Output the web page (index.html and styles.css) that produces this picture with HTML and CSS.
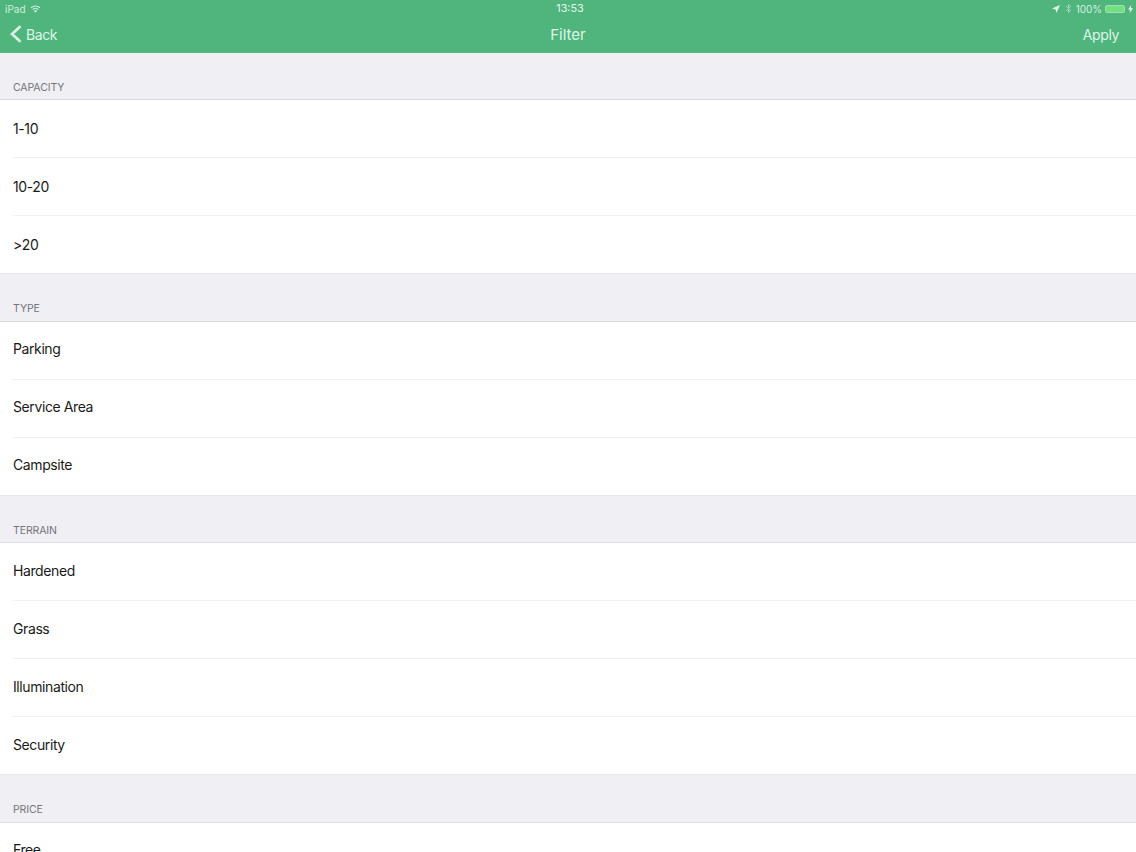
FILE: index.html
```html
<!DOCTYPE html>
<html lang="en">
<head>
<meta charset="utf-8">
<title>Filter</title>
<link rel="stylesheet" href="styles.css">
</head>
<body>
<div class="app">
  <header class="nav">
    <div class="status">
      <div class="status-left">
        <span>iPad</span>
        <svg class="wifi" width="11" height="8" viewBox="0 0 12 9"><path d="M6 8.6 4.2 6.6a2.6 2.6 0 0 1 3.6 0Z" fill="#cfeedd"/><path d="M2.9 5.1a4.5 4.5 0 0 1 6.2 0M1 3.1a7.2 7.2 0 0 1 10 0" fill="none" stroke="#cfeedd" stroke-width="1.2"/></svg>
      </div>
      <div class="status-time">13:53</div>
      <div class="status-right">
        <svg class="loc" width="8" height="8" viewBox="0 0 8 8"><path d="M8 0 0 3.6l3.6.8.8 3.6Z" fill="#e3f5ea"/></svg>
        <svg class="bt" width="7" height="11" viewBox="0 0 6 10"><path d="M.6 2.6 5 6.8 3 8.8V1.2l2 2L.6 7.4" fill="none" stroke="#9fd6b6" stroke-width=".9"/></svg>
        <span class="pct">100%</span>
        <span class="battery"><span class="battery-fill"></span></span>
        <svg class="bolt" width="5" height="8" viewBox="0 0 5 8"><path d="M3.2 0 0 4.6h2L1.6 8 5 3.2H3Z" fill="#e3f5ea"/></svg>
      </div>
    </div>
    <div class="bar">
      <a class="back">
        <svg width="12" height="18" viewBox="0 0 12 18"><path d="M10.5 1.2 2 9l8.5 7.8" fill="none" stroke="#dff5e8" stroke-width="2.6"/></svg>
        <span>Back</span>
      </a>
      <div class="title">Filter</div>
      <a class="apply">Apply</a>
    </div>
  </header>
  <main>
    <section>
      <h2 class="head">CAPACITY</h2>
      <ul class="list">
        <li>1-10</li>
        <li>10-20</li>
        <li>&gt;20</li>
      </ul>
    </section>
    <section>
      <h2 class="head">TYPE</h2>
      <ul class="list">
        <li>Parking</li>
        <li>Service Area</li>
        <li>Campsite</li>
      </ul>
    </section>
    <section>
      <h2 class="head">TERRAIN</h2>
      <ul class="list">
        <li>Hardened</li>
        <li>Grass</li>
        <li>Illumination</li>
        <li>Security</li>
      </ul>
    </section>
    <section>
      <h2 class="head">PRICE</h2>
      <ul class="list">
        <li>Free</li>
      </ul>
    </section>
  </main>
</div>
</body>
</html>
```
FILE: styles.css
```css
* { box-sizing: border-box; }
html, body { margin: 0; height: 100%; overflow: hidden; }
body { font-family: Inter, "Liberation Sans", sans-serif; background: #efeff4; color: #1a1a1a; }
.app { height: 852px; overflow: hidden; display: flex; flex-direction: column; }
.nav { height: 53px; flex: none; background: #4fb57d; color: #dff5e8; border-bottom: 1px solid #55b682; }
.status { height: 16px; display: grid; grid-template-columns: 1fr auto 1fr; align-items: center; padding: 1px 3px 0 5px; font-size: 10px; }
.status-left { display: flex; align-items: center; gap: 4px; color: #cfeedd; }
.status-time { font-size: 10.8px; color: #e3f5ea; margin-left: 2px; }
.status-right { display: flex; align-items: center; justify-content: flex-end; gap: 3px; color: #d5f0e0; }
.loc { margin-right: 2px; }
.pct { margin-left: 1px; letter-spacing: -0.05px; }
.battery { width: 20px; height: 8px; border: 1px solid #a5dcb9; border-radius: 2px; display: block; }
.battery-fill { display: block; height: 100%; background: #72e07f; }
.bar { height: 36px; display: grid; grid-template-columns: 1fr auto 1fr; align-items: center; padding: 0 17px 0 15px; }
.back { display: flex; align-items: center; gap: 4px; font-size: 14px; letter-spacing: -0.4px; margin-left: -5px; }
.title { font-size: 15px; margin-left: 2px; }
.apply { justify-self: end; font-size: 14px; letter-spacing: -0.4px; }
.head { margin: 0; height: 47.5px; padding: 28px 13px 0; font-size: 10.5px; font-weight: 400; color: #75757a; line-height: 13px; letter-spacing: -0.1px; border-bottom: 1px solid #dddde0; }
section:first-child .head { height: 47px; }
.list { margin: 0; padding: 0; list-style: none; background: #fff; border-bottom: 1px solid #e8e8ea; }
.list li { height: 58px; margin-left: 13px; display: flex; align-items: center; font-size: 14px; letter-spacing: -0.4px; border-bottom: 1px solid #f0f0f2; padding-bottom: 1px; }
section:not(:first-child) .list li { padding-bottom: 3px; }
.list li:last-child { height: 57px; border-bottom: 0; }
```
